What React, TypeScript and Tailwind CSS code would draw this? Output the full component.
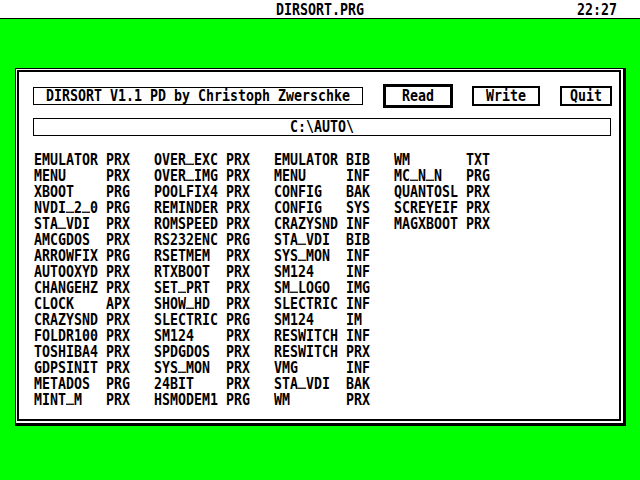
import React from 'react'

const columns = [
  [
    ['EMULATOR', 'PRX'], ['MENU', 'PRX'], ['XBOOT', 'PRG'], ['NVDI_2_0', 'PRG'],
    ['STA_VDI', 'PRX'], ['AMCGDOS', 'PRX'], ['ARROWFIX', 'PRG'], ['AUTOOXYD', 'PRX'],
    ['CHANGEHZ', 'PRX'], ['CLOCK', 'APX'], ['CRAZYSND', 'PRX'], ['FOLDR100', 'PRX'],
    ['TOSHIBA4', 'PRX'], ['GDPSINIT', 'PRX'], ['METADOS', 'PRG'], ['MINT_M', 'PRX'],
  ],
  [
    ['OVER_EXC', 'PRX'], ['OVER_IMG', 'PRX'], ['POOLFIX4', 'PRX'], ['REMINDER', 'PRX'],
    ['ROMSPEED', 'PRX'], ['RS232ENC', 'PRG'], ['RSETMEM', 'PRX'], ['RTXBOOT', 'PRX'],
    ['SET_PRT', 'PRX'], ['SHOW_HD', 'PRX'], ['SLECTRIC', 'PRG'], ['SM124', 'PRX'],
    ['SPDGDOS', 'PRX'], ['SYS_MON', 'PRX'], ['24BIT', 'PRX'], ['HSMODEM1', 'PRG'],
  ],
  [
    ['EMULATOR', 'BIB'], ['MENU', 'INF'], ['CONFIG', 'BAK'], ['CONFIG', 'SYS'],
    ['CRAZYSND', 'INF'], ['STA_VDI', 'BIB'], ['SYS_MON', 'INF'], ['SM124', 'INF'],
    ['SM_LOGO', 'IMG'], ['SLECTRIC', 'INF'], ['SM124', 'IM'], ['RESWITCH', 'INF'],
    ['RESWITCH', 'PRX'], ['VMG', 'INF'], ['STA_VDI', 'BAK'], ['WM', 'PRX'],
  ],
  [
    ['WM', 'TXT'], ['MC_N_N', 'PRG'], ['QUANTOSL', 'PRX'], ['SCREYEIF', 'PRX'], ['MAGXBOOT', 'PRX'],
  ],
]

// atari system font look: 8px wide cells, tall caps.
// underscores sit on the baseline like the ST font, so draw them as a bar
function T({ children }: { children: string }) {
  const parts = children.split('_')
  return (
    <span className="inline-block scale-y-[1.24] whitespace-pre leading-[12.8px]">
      {parts.map((p, i) => (
        <React.Fragment key={i}>
          {i > 0 && <span className="inline-block w-[8px] h-px bg-black" />}
          {p}
        </React.Fragment>
      ))}
    </span>
  )
}

export default function App() {
  return (
    <div className="w-[640px] h-[480px] bg-[#00ff00] font-['DejaVu_Sans_Mono',monospace] font-bold text-[13.29px] leading-4 text-black overflow-hidden">
      {/* menu bar */}
      <div className="h-[19px] bg-white border-b border-black flex items-center relative">
        <div className="w-full text-center pt-px"><T>DIRSORT.PRG</T></div>
        <div className="absolute right-[23px] top-[2px]"><T>22:27</T></div>
      </div>

      {/* dialog: outline + shadow on right/bottom, 2px frame inside */}
      <div className="ml-[15px] mt-[49px] w-[611px] h-[358px] bg-white border-t border-l border-r-[3px] border-b-[3px] border-black pt-px pl-px pr-[2px] pb-[2px]">
        <div className="h-full border-2 border-black pl-[14px]">
          <div className="flex items-center mt-[12px] h-[24px]">
            <div className="shrink-0 w-[330px] h-[18px] border border-black flex items-center justify-center">
              <T>DIRSORT V1.1 PD by Christoph Zwerschke</T>
            </div>
            <div className="shrink-0 ml-[20px] w-[70px] h-[24px] border-[3px] border-black flex items-center justify-center">
              <T>Read</T>
            </div>
            <div className="shrink-0 ml-[19px] w-[68px] h-[20px] border-2 border-black flex items-center justify-center">
              <T>Write</T>
            </div>
            <div className="shrink-0 ml-[20px] w-[52px] h-[20px] border-2 border-black flex items-center justify-center">
              <T>Quit</T>
            </div>
          </div>

          <div className="mt-[10px] w-[578px] h-[18px] border border-black flex items-center justify-center">
            <T>C:\AUTO\</T>
          </div>

          <div className="flex mt-[16px] ml-px">
            {columns.map((col, i) => (
              <div key={i} className="w-[120px]">
                {col.map(([name, ext], j) => (
                  <div key={j} className="h-4 whitespace-pre">
                    <T>{name.padEnd(9) + ext}</T>
                  </div>
                ))}
              </div>
            ))}
          </div>
        </div>
      </div>
    </div>
  )
}
